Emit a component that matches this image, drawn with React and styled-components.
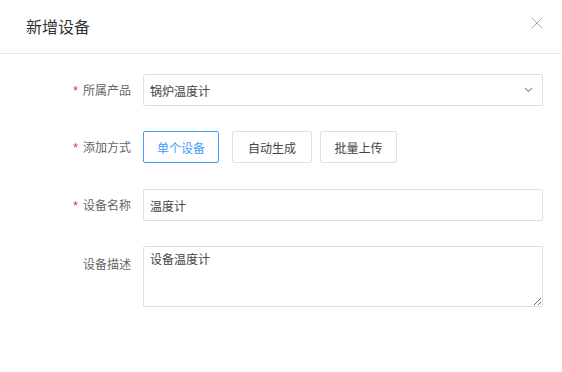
import React from "react";
import styled, { createGlobalStyle } from "styled-components";

const Global = createGlobalStyle`
  html, body { margin: 0; padding: 0; background: #fff; }
  body { font-family: "Noto Sans CJK SC", "Noto Sans", sans-serif; }
  * { box-sizing: border-box; }
`;

const Dialog = styled.div`
  width: 562px;
  height: 372px;
  background: #fff;
  display: flex;
  flex-direction: column;
`;

const Header = styled.div`
  height: 54px;
  border-bottom: 1px solid #e9e9e9;
  display: flex;
  align-items: center;
  justify-content: space-between;
  padding: 0 18px 0 26px;
`;

const Title = styled.div`
  font-size: 16px;
  color: #333;
  line-height: 20px;
  margin-top: -1px;
`;

const CloseBtn = styled.button`
  border: none;
  background: none;
  padding: 0;
  width: 14px;
  height: 14px;
  display: flex;
  align-items: center;
  justify-content: center;
  cursor: pointer;
  margin-top: -7px;
`;

const Form = styled.div`
  padding: 20px 19px 0 0;
  display: flex;
  flex-direction: column;
`;

const Row = styled.div`
  display: flex;
  align-items: ${(p) => (p.$top ? "flex-start" : "center")};
  margin-bottom: ${(p) => p.$mb}px;
`;

const Label = styled.label`
  width: 143px;
  padding-right: 12px;
  text-align: right;
  font-size: 12px;
  color: #666;
  line-height: 18px;
  flex-shrink: 0;
  padding-top: ${(p) => (p.$top ? "9px" : "0")};
`;

const Star = styled.span`
  color: #f5222d;
  margin-right: 5px;
  font-family: "Liberation Sans", sans-serif;
  font-size: 12px;
`;

const Control = styled.div`
  flex: 1;
  height: 32px;
  border: 1px solid #dcdfe6;
  border-radius: 2px;
  display: flex;
  align-items: center;
  padding: 0 9px 0 6px;
  font-size: 12px;
  color: #444;
  justify-content: space-between;
`;

const TextArea = styled.textarea`
  flex: 1;
  height: 61px;
  border: 1px solid #dcdfe6;
  border-radius: 2px;
  padding: 3px 6px;
  font-family: "Noto Sans CJK SC", "Noto Sans", sans-serif;
  font-size: 12px;
  line-height: 18px;
  color: #444;
  outline: none;
  resize: both;
  margin: 0;
`;

const Buttons = styled.div`
  display: flex;
  gap: 8px;
`;

const OptButton = styled.button`
  height: 32px;
  width: ${(p) => p.$w}px;
  margin-right: ${(p) => p.$mr || 0}px;
  border: 1px solid ${(p) => (p.$active ? "#409eff" : "#dcdfe6")};
  color: ${(p) => (p.$active ? "#409eff" : "#444")};
  background: #fff;
  border-radius: 2px;
  font-family: "Noto Sans CJK SC", "Noto Sans", sans-serif;
  font-size: 12px;
  padding: 0;
  cursor: pointer;
`;

const Chevron = () => (
  <svg width="9" height="6" viewBox="0 0 9 6">
    <path d="M1 1 L4.5 4.5 L8 1" fill="none" stroke="#909399" strokeWidth="1.1" />
  </svg>
);

const CloseIcon = () => (
  <svg width="12" height="12" viewBox="0 0 12 12">
    <path d="M0.5 0.5 L11.5 11.5 M11.5 0.5 L0.5 11.5" stroke="#a8abb2" strokeWidth="1" />
  </svg>
);

export default function App() {
  return (
    <>
      <Global />
      <Dialog>
        <Header>
          <Title>新增设备</Title>
          <CloseBtn aria-label="close">
            <CloseIcon />
          </CloseBtn>
        </Header>
        <Form>
          <Row $mb={25}>
            <Label><Star>*</Star>所属产品</Label>
            <Control>
              <span>锅炉温度计</span>
              <Chevron />
            </Control>
          </Row>
          <Row $mb={26}>
            <Label><Star>*</Star>添加方式</Label>
            <Buttons>
              <OptButton $active $w={76} $mr={5}>单个设备</OptButton>
              <OptButton $w={80}>自动生成</OptButton>
              <OptButton $w={77}>批量上传</OptButton>
            </Buttons>
          </Row>
          <Row $mb={25}>
            <Label><Star>*</Star>设备名称</Label>
            <Control>
              <span>温度计</span>
            </Control>
          </Row>
          <Row $top $mb={0}>
            <Label $top>设备描述</Label>
            <TextArea defaultValue="设备温度计" />
          </Row>
        </Form>
      </Dialog>
    </>
  );
}
